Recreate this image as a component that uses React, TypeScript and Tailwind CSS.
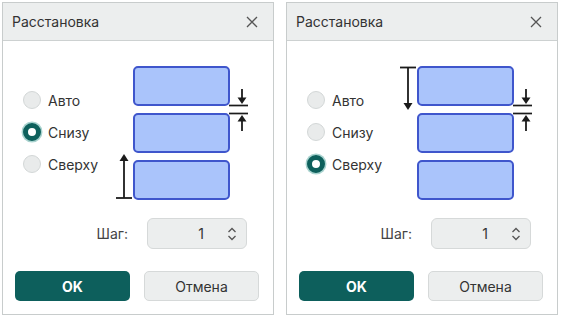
type Mode = 'auto' | 'bottom' | 'top'

const options: { value: Mode; label: string }[] = [
  { value: 'auto', label: 'Авто' },
  { value: 'bottom', label: 'Снизу' },
  { value: 'top', label: 'Сверху' },
]

function Radio({ checked }: { checked: boolean }) {
  return (
    <span
      className={
        checked
          ? 'w-[18px] h-[18px] rounded-full border-[5px] border-[#0e605c] bg-white shadow-[0_0_0_1.5px_#a9d3cf] shrink-0'
          : 'w-[18px] h-[18px] rounded-full border border-[#d3d7d7] bg-[#e9ebeb] shrink-0'
      }
    />
  )
}

function Diagram({ mode }: { mode: Mode }) {
  const fill = '#aac4fb'
  const stroke = '#3f56cc'
  const ink = '#1b1b1b'
  return (
    <svg width="140" height="140" viewBox="0 0 140 140" className="shrink-0">
      {[4, 51, 98].map((y) => (
        <rect key={y} x="24" y={y} width="95" height="38" rx="4" fill={fill} stroke={stroke} strokeWidth="2" />
      ))}
      {/* gap marker */}
      <line x1="119" y1="42.5" x2="138" y2="42.5" stroke={ink} strokeWidth="1.7" />
      <line x1="119" y1="50.5" x2="138" y2="50.5" stroke={ink} strokeWidth="1.7" />
      <line x1="132" y1="26" x2="132" y2="36" stroke={ink} strokeWidth="1.8" />
      <polygon points="127.5,34.5 136.5,34.5 132,41" fill={ink} />
      <line x1="132" y1="58" x2="132" y2="68" stroke={ink} strokeWidth="1.8" />
      <polygon points="132,52 127.5,58.5 136.5,58.5" fill={ink} />
      {mode === 'bottom' && (
        <g>
          <line x1="6" y1="135" x2="22" y2="135" stroke={ink} strokeWidth="1.8" />
          <line x1="14" y1="97" x2="14" y2="135" stroke={ink} strokeWidth="1.8" />
          <polygon points="14,91 9.5,98 18.5,98" fill={ink} />
        </g>
      )}
      {mode === 'top' && (
        <g>
          <line x1="6" y1="4.5" x2="22" y2="4.5" stroke={ink} strokeWidth="1.8" />
          <line x1="14" y1="4.5" x2="14" y2="41" stroke={ink} strokeWidth="1.8" />
          <polygon points="14,47 9.5,40 18.5,40" fill={ink} />
        </g>
      )}
    </svg>
  )
}

function Dialog({ mode }: { mode: Mode }) {
  return (
    <div className="w-[272px] h-[313px] border border-[#c8cccc] bg-white flex flex-col">
      <div className="h-[37px] border-b border-[#cdd1d1] bg-[#eceeee] flex items-center justify-between pl-[9px] pr-[15px] box-content">
        <span className="text-[14px] text-[#333]">Расстановка</span>
        <svg width="12" height="12" viewBox="0 0 12 12">
          <path d="M1 1 L11 11 M11 1 L1 11" stroke="#555" strokeWidth="1.3" fill="none" />
        </svg>
      </div>

      <div className="flex items-center pt-[22px] pl-[20px]">
        <div className="w-[87px] flex flex-col gap-[14px] mt-[-2px]">
          {options.map((o) => (
            <div key={o.value} className="flex items-center gap-[7px] h-[18px]">
              <Radio checked={o.value === mode} />
              <span className="text-[14px] text-[#333]">{o.label}</span>
            </div>
          ))}
        </div>
        <Diagram mode={mode} />
      </div>

      <div className="flex items-center justify-end gap-[19px] pr-[26px] mt-[15px]">
        <span className="text-[14px] text-[#444]">Шаг:</span>
        <div className="w-[100px] h-[31px] rounded-[6px] border border-[#d6d9d9] bg-[#eceeee] flex items-center justify-end gap-[23px] pr-[9px]">
          <span className="text-[14px] text-[#333]">1</span>
          <svg width="10" height="16" viewBox="0 0 10 16">
            <path d="M1.5 6 L5 2.5 L8.5 6 M1.5 10 L5 13.5 L8.5 10" stroke="#555" strokeWidth="1.3" fill="none" />
          </svg>
        </div>
      </div>

      <div className="flex gap-[14px] pl-[12px] pr-[14px] mt-[22px]">
        <button className="w-[115px] h-[30px] rounded-[5px] bg-[#0d5f5c] text-white text-[14px] font-bold">OK</button>
        <button className="w-[115px] h-[30px] rounded-[5px] bg-[#eceeee] border border-[#d6d9d9] text-[#333] text-[14px]">Отмена</button>
      </div>
    </div>
  )
}

export default function App() {
  return (
    <div className="w-[561px] h-[320px] bg-white flex gap-[12px] pt-[2px] pl-[2px] font-['Inter',sans-serif]">
      <Dialog mode="bottom" />
      <Dialog mode="top" />
    </div>
  )
}
